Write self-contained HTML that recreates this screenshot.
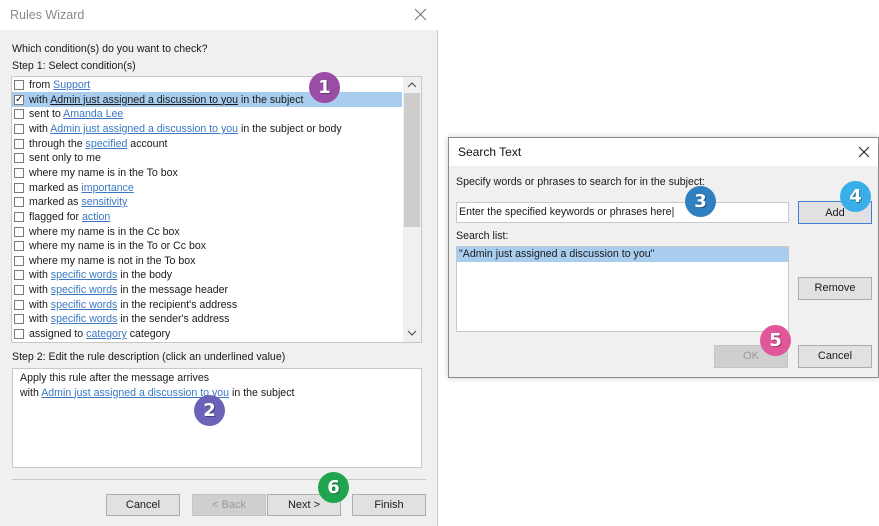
<!DOCTYPE html>
<html><head><style>
*{margin:0;padding:0;box-sizing:border-box}
body{width:879px;height:526px;background:#fff;position:relative;overflow:hidden;font-family:"Liberation Sans",sans-serif;font-size:10.6px;color:#1a1a1a}
.a{position:absolute}
.l{color:#3b78c2;text-decoration:underline}
.row{position:absolute;left:12px;width:390px;height:14.6px;line-height:14.6px;padding-left:17px;white-space:nowrap}
.cb{position:absolute;left:2px;top:2px;width:10px;height:10px;border:1px solid #7a7a7a;background:#fff}
.btn{position:absolute;background:#e1e1e1;border:1px solid #adadad;text-align:center;line-height:20px;font-size:11px}
.dis{color:#9a9a9a;background:#cfcfcf;border-color:#c4c4c4}
.bd{position:absolute;width:31px;height:31px;border-radius:50%;color:#fff;font-weight:bold;font-size:18px;text-align:center;line-height:31px;font-family:"DejaVu Sans",sans-serif;text-shadow:1px 1px 0 rgba(0,0,0,.35)}
</style></head><body>
<div class="a" style="left:0;top:0;width:438px;height:526px;background:#f0f0f0;border-right:1px solid #c8c8c8"></div>
<div class="a" style="left:0;top:0;width:438px;height:30px;background:#fff"></div>
<div class="a" style="left:10px;top:8px;font-size:12.5px;color:#8a8a8a">Rules Wizard</div>
<svg class="a" style="left:414px;top:8px" width="13" height="13"><path d="M1 1L12 12M12 1L1 12" stroke="#777" stroke-width="1.1"/></svg>
<div class="a" style="left:12px;top:43px">Which condition(s) do you want to check?</div>
<div class="a" style="left:12px;top:60px">Step 1: Select condition(s)</div>
<div class="a" style="left:11px;top:76px;width:411px;height:267px;background:#fff;border:1px solid #c8c8c8"></div>
<div class="a" style="left:403px;top:77px;width:18px;height:265px;background:#f0f0f0"></div>
<div class="a" style="left:404px;top:93px;width:16px;height:134px;background:#cdcdcd"></div>
<svg class="a" style="left:407px;top:82px" width="10" height="6"><path d="M1 5L5 1L9 5" stroke="#555" fill="none" stroke-width="1.2"/></svg>
<svg class="a" style="left:407px;top:330px" width="10" height="6"><path d="M1 1L5 5L9 1" stroke="#555" fill="none" stroke-width="1.2"/></svg>
<div class="a" style="left:12px;top:92px;width:390px;height:15px;background:#a9cdef"></div>
<div class="row" style="top:78px"><span class="cb"></span>from <span class="l">Support</span></div>
<div class="row" style="top:92.6px"><span class="cb" style="font-size:10px;line-height:8px;text-align:center">✓</span>with <span style="text-decoration:underline">Admin just assigned a discussion to you</span> in the subject</div>
<div class="row" style="top:107.3px"><span class="cb"></span>sent to <span class="l">Amanda Lee</span></div>
<div class="row" style="top:121.9px"><span class="cb"></span>with <span class="l">Admin just assigned a discussion to you</span> in the subject or body</div>
<div class="row" style="top:136.6px"><span class="cb"></span>through the <span class="l">specified</span> account</div>
<div class="row" style="top:151.2px"><span class="cb"></span>sent only to me</div>
<div class="row" style="top:165.9px"><span class="cb"></span>where my name is in the To box</div>
<div class="row" style="top:180.5px"><span class="cb"></span>marked as <span class="l">importance</span></div>
<div class="row" style="top:195.2px"><span class="cb"></span>marked as <span class="l">sensitivity</span></div>
<div class="row" style="top:209.8px"><span class="cb"></span>flagged for <span class="l">action</span></div>
<div class="row" style="top:224.5px"><span class="cb"></span>where my name is in the Cc box</div>
<div class="row" style="top:239.1px"><span class="cb"></span>where my name is in the To or Cc box</div>
<div class="row" style="top:253.8px"><span class="cb"></span>where my name is not in the To box</div>
<div class="row" style="top:268.4px"><span class="cb"></span>with <span class="l">specific words</span> in the body</div>
<div class="row" style="top:283.1px"><span class="cb"></span>with <span class="l">specific words</span> in the message header</div>
<div class="row" style="top:297.7px"><span class="cb"></span>with <span class="l">specific words</span> in the recipient's address</div>
<div class="row" style="top:312.4px"><span class="cb"></span>with <span class="l">specific words</span> in the sender's address</div>
<div class="row" style="top:327px"><span class="cb"></span>assigned to <span class="l">category</span> category</div>
<div class="a" style="left:12px;top:351px">Step 2: Edit the rule description (click an underlined value)</div>
<div class="a" style="left:12px;top:368px;width:410px;height:100px;background:#fff;border:1px solid #c8c8c8;padding:2px 7px;line-height:14.5px">Apply this rule after the message arrives<br>with <span class="l">Admin just assigned a discussion to you</span> in the subject</div>
<div class="a" style="left:12px;top:479px;width:414px;height:1px;background:#c8c8c8"></div>
<div class="btn" style="left:106px;top:494px;width:74px;height:22px">Cancel</div>
<div class="btn dis" style="left:192px;top:494px;width:74px;height:22px">&lt; Back</div>
<div class="btn" style="left:267px;top:494px;width:74px;height:22px">Next &gt;</div>
<div class="btn" style="left:352px;top:494px;width:74px;height:22px">Finish</div>
<div class="a" style="left:448px;top:137px;width:431px;height:241px;background:#f0f0f0;border:1px solid #8a8a8a;box-shadow:0 0 6px rgba(0,0,0,.2)"></div>
<div class="a" style="left:449px;top:138px;width:429px;height:28px;background:#fff"></div>
<div class="a" style="left:458px;top:145px;font-size:12px;color:#111">Search Text</div>
<svg class="a" style="left:858px;top:146px" width="12" height="12"><path d="M1 1L11 11M11 1L1 11" stroke="#222" stroke-width="1.1"/></svg>
<div class="a" style="left:456px;top:176px">Specify words or phrases to search for in the subject:</div>
<div class="a" style="left:456px;top:202px;width:333px;height:21px;background:#fff;border:1px solid #c8c8c8;padding:3px 2px;white-space:nowrap">Enter the specified keywords or phrases here|</div>
<div class="btn" style="left:798px;top:201px;width:74px;height:23px;border-color:#3c7fd4;line-height:22px">Add</div>
<div class="a" style="left:456px;top:230px">Search list:</div>
<div class="a" style="left:456px;top:246px;width:333px;height:86px;background:#fff;border:1px solid #c8c8c8"></div>
<div class="a" style="left:457px;top:247px;width:331px;height:15px;background:#a9cdef;padding-left:2px;line-height:15px">"Admin just assigned a discussion to you"</div>
<div class="btn" style="left:798px;top:277px;width:74px;height:23px">Remove</div>
<div class="btn dis" style="left:714px;top:345px;width:74px;height:23px">OK</div>
<div class="btn" style="left:798px;top:345px;width:74px;height:23px">Cancel</div>
<div class="bd" style="left:309px;top:72px;background:#9b4ca6">1</div>
<div class="bd" style="left:194px;top:395px;background:#6c63b8">2</div>
<div class="bd" style="left:685px;top:186px;background:#2f7fc1">3</div>
<div class="bd" style="left:840px;top:181px;background:#3aaee8">4</div>
<div class="bd" style="left:760px;top:325px;background:#e0589a">5</div>
<div class="bd" style="left:318px;top:472px;background:#1fa54f">6</div>
</body></html>
